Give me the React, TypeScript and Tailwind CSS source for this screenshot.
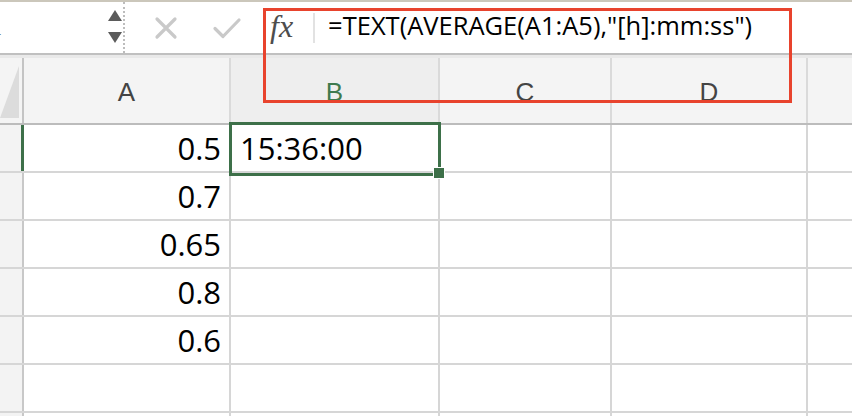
import React from "react";

const cols = [
  { k: "A", w: "w-[207px]" },
  { k: "B", w: "w-[209px]" },
  { k: "C", w: "w-[172px]" },
  { k: "D", w: "w-[196px]" },
];

const values = ["0.5", "0.7", "0.65", "0.8", "0.6", "", "", ""];

export default function App() {
  return (
    <div className="relative w-[852px] h-[416px] overflow-hidden bg-white" style={{ fontFamily: '"Open Sans", "Liberation Sans", sans-serif' }}>
      {/* top strip */}
      <div className="h-[2px] bg-[#cbc7bb]" />
      {/* formula bar */}
      <div className="flex h-[53px] border-b-2 border-[#c0c0c0] bg-white">
        <div className="relative flex w-[125px] shrink-0 items-center overflow-hidden border-r-2 border-dotted border-[#bdbdbd]">
          <span className="ml-[-9px] text-[22px] leading-none text-black" style={{ fontFamily: '"Liberation Serif", serif' }}>1</span>
          <div className="absolute right-[1px] top-[8px] flex flex-col items-center gap-[11px]">
            <svg width="14" height="11" viewBox="0 0 14 11"><path d="M7 0 L14 11 L0 11 Z" fill="#5b5b5b" /></svg>
            <svg width="14" height="11" viewBox="0 0 14 11"><path d="M0 0 L14 0 L7 11 Z" fill="#5b5b5b" /></svg>
          </div>
        </div>
        <div className="flex items-center pl-[29px]">
          <svg width="24" height="24" viewBox="0 0 24 24">
            <path d="M3 3 L21 21 M21 3 L3 21" stroke="#c9c9c9" strokeWidth="3.2" strokeLinecap="round" />
          </svg>
          <svg className="ml-[34px]" width="30" height="24" viewBox="0 0 30 24">
            <path d="M3 12.5 L11 20.5 L27 4" stroke="#c9c9c9" strokeWidth="3.2" strokeLinecap="round" strokeLinejoin="round" fill="none" />
          </svg>
          <span className="ml-[28px] mb-[3px] text-[32px] italic leading-none text-[#4d4d4d]" style={{ fontFamily: '"Liberation Serif", serif' }}>fx</span>
          <div className="ml-[20px] h-[30px] w-[2px] bg-[#e2e2e2]" />
          <span className="ml-[13px] mb-[3px] text-[25.5px] leading-none text-black">=TEXT(AVERAGE(A1:A5),"[h]:mm:ss")</span>
        </div>
      </div>
      <div className="h-[3px] bg-[#e9e9e9]" />
      {/* header row */}
      <div className="flex h-[67px] border-b-2 border-[#bcbcbc] bg-[#f4f4f4]">
        <div className="flex w-[24px] shrink-0 items-end border-r-2 border-[#c4c4c4] pb-[5px]">
          <svg width="19" height="52" viewBox="0 0 19 52"><path d="M19 0 L19 52 L0 52 Z" fill="#dcdcdc" /></svg>
        </div>
        {cols.map((c) => (
          <div
            key={c.k}
            className={`${c.w} flex shrink-0 items-center justify-center border-r-2 border-[#dadada] text-[26px] ${c.k === "B" ? "bg-[#eeeeee] text-[#3e7a4e]" : "text-[#444444]"}`}
            style={{ fontFamily: '"Liberation Sans", Arial, sans-serif' }}
          >
            <span className="mt-[4px]">{c.k}</span>
          </div>
        ))}
        <div className="flex-1" />
      </div>
      {/* rows */}
      {values.map((v, i) => (
        <div key={i} className="flex h-[48px] border-b-2 border-[#d6d6d6]">
          <div className={`w-[24px] shrink-0 border-r-2 bg-[#f3f3f3] ${i === 0 ? "border-[#3d7049] border-r-[3px] w-[24px]" : "border-[#c8c8c8]"}`} />
          <div className="flex w-[207px] shrink-0 items-center justify-end border-r-2 border-[#d6d6d6] pr-[8px] text-[31px] text-black">
            {v}
          </div>
          <div className="flex w-[209px] shrink-0 items-center border-r-2 border-[#d6d6d6] pl-[9px] text-[31px] text-black">
            {i === 0 ? "15:36:00" : ""}
          </div>
          <div className="w-[172px] shrink-0 border-r-2 border-[#d6d6d6]" />
          <div className="w-[196px] shrink-0 border-r-2 border-[#d6d6d6]" />
          <div className="flex-1" />
        </div>
      ))}
      {/* selection */}
      <div className="absolute left-[229px] top-[122px] h-[54px] w-[212px] border-[3px] border-[#3d7049]" />
      <div className="absolute left-[433px] top-[167px] h-[12px] w-[12px] border border-white bg-[#3d7049]" />
      {/* annotation */}
      <div className="absolute left-[263px] top-[8px] h-[95px] w-[529px] border-[3px] border-[#e8432d]" />
    </div>
  );
}
